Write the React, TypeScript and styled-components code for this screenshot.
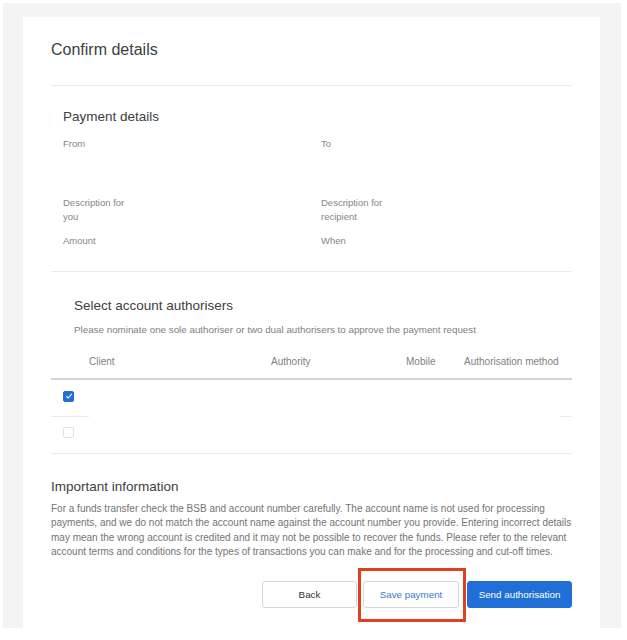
import React from "react";
import styled, { createGlobalStyle } from "styled-components";

const Global = createGlobalStyle`
  html, body { margin: 0; padding: 0; background: #ffffff; }
  body { font-family: "Liberation Sans", Arial, Helvetica, sans-serif; }
  * { box-sizing: border-box; }
`;

const Page = styled.div`
  width: 627px;
  height: 640px;
  padding: 3px 6px 0 3px;
  background: #ffffff;
`;

const Backdrop = styled.div`
  background: #f4f4f4;
  height: 625px;
  padding: 14px 21px 0 20px;
  display: flex;
  flex-direction: column;
`;

const Card = styled.div`
  background: #ffffff;
  flex: 1;
  padding: 0 28px;
  display: flex;
  flex-direction: column;
`;

const Title = styled.h1`
  margin: 23px 0 0;
  font-size: 16px;
  line-height: 20px;
  font-weight: 400;
  color: #404040;
`;

const Divider = styled.div<{ $top: number }>`
  margin-top: ${(p) => p.$top}px;
  height: 1px;
  background: #ebebeb;
`;

const Section = styled.section<{ $indent: number; $top: number }>`
  padding-left: ${(p) => p.$indent}px;
  margin-top: ${(p) => p.$top}px;
`;

const Heading = styled.h2`
  margin: 0;
  font-size: 13.5px;
  line-height: 18px;
  font-weight: 400;
  color: #404040;
`;

const FieldGrid = styled.div`
  margin-top: 11px;
  display: grid;
  grid-template-columns: 258px 1fr;
`;

const Field = styled.div<{ $gap: number }>`
  padding-bottom: ${(p) => p.$gap}px;
`;

const Label = styled.div`
  max-width: 70px;
  font-size: 9.5px;
  line-height: 14px;
  color: #858585;
`;

const Value = styled.div<{ $h: number }>`
  min-height: ${(p) => p.$h}px;
  font-size: 10px;
  color: #333;
`;

const Hint = styled.p`
  margin: 8px 0 0;
  font-size: 9.8px;
  line-height: 14px;
  color: #808080;
  white-space: nowrap;
`;

const Table = styled.div`
  margin-top: 18px;
  display: flex;
  flex-direction: column;
`;

const Grid = styled.div`
  display: grid;
  grid-template-columns: 38px 182px 135px 58px 1fr 12px;
`;

const HeadRow = styled(Grid)`
  padding-bottom: 9px;
  border-bottom: 2px solid #d4d4d4;
`;

const HeadCell = styled.div`
  font-size: 10px;
  line-height: 14px;
  color: #7f7f7f;
  white-space: nowrap;
`;

const BodyRow = styled(Grid)<{ $last?: boolean }>`
  height: 37px;
  border-bottom: ${(p) => (p.$last ? "1px solid #ebebeb" : "none")};
`;

const Cell = styled.div<{ $edge?: boolean }>`
  display: flex;
  align-items: center;
  border-bottom: ${(p) => (p.$edge ? "1px solid #ebebeb" : "1px solid transparent")};
`;

const CheckCell = styled(Cell)`
  padding-left: 12px;
  padding-bottom: 4px;
`;

const Box = styled.span<{ $on: boolean }>`
  width: 11px;
  height: 11px;
  border-radius: 2px;
  display: inline-flex;
  align-items: center;
  justify-content: center;
  background: ${(p) => (p.$on ? "#1f6fd6" : "#ffffff")};
  border: 1px solid ${(p) => (p.$on ? "#1f6fd6" : "#e2e2e2")};
`;

const Info = styled.section`
  margin-top: 24px;
`;

const Para = styled.p`
  margin: 6px 0 0;
  font-size: 10px;
  line-height: 14.3px;
  color: #747474;
  white-space: nowrap;
`;

const Actions = styled.div`
  margin-top: 22px;
  display: flex;
  justify-content: flex-end;
  align-items: center;
`;

const Button = styled.button<{ $variant: "plain" | "outline" | "primary"; $w: number; $ml: number }>`
  position: relative;
  width: ${(p) => p.$w}px;
  height: 27px;
  margin-left: ${(p) => p.$ml}px;
  border-radius: 3px;
  font-family: "Liberation Sans", Arial, sans-serif;
  font-size: 9.8px;
  cursor: pointer;
  border: 1px solid ${(p) => (p.$variant === "primary" ? "#1f6fd6" : "#d6d6d6")};
  background: ${(p) => (p.$variant === "primary" ? "#1f6fd6" : "#ffffff")};
  color: ${(p) =>
    p.$variant === "primary" ? "#ffffff" : p.$variant === "outline" ? "#3b79c9" : "#333333"};
`;

const Highlight = styled.span`
  position: absolute;
  top: -14px;
  bottom: -15px;
  left: -6px;
  right: -8px;
  border: 3px solid #e0401f;
  pointer-events: none;
`;

const Check = () => (
  <svg width="8" height="8" viewBox="0 0 8 8">
    <path d="M1.2 4.2 L3.2 6 L6.8 1.8" fill="none" stroke="#ffffff" strokeWidth="1.1" />
  </svg>
);

const rows = [true, false];

export default function App() {
  return (
    <>
      <Global />
      <Page>
        <Backdrop>
          <Card>
            <Title>Confirm details</Title>
            <Divider $top={25} />
            <Section $indent={12} $top={22}>
              <Heading>Payment details</Heading>
              <FieldGrid>
                <Field $gap={15}>
                  <Label>From</Label>
                  <Value $h={30} />
                </Field>
                <Field $gap={15}>
                  <Label>To</Label>
                  <Value $h={30} />
                </Field>
                <Field $gap={10}>
                  <Label>Description for you</Label>
                  <Value $h={0} />
                </Field>
                <Field $gap={10}>
                  <Label>Description for recipient</Label>
                  <Value $h={0} />
                </Field>
                <Field $gap={0}>
                  <Label>Amount</Label>
                  <Value $h={16} />
                </Field>
                <Field $gap={0}>
                  <Label>When</Label>
                  <Value $h={16} />
                </Field>
              </FieldGrid>
            </Section>
            <Divider $top={7} />
            <Section $indent={23} $top={25}>
              <Heading>Select account authorisers</Heading>
              <Hint>Please nominate one sole authoriser or two dual authorisers to approve the payment request</Hint>
            </Section>
            <Table>
              <HeadRow>
                <HeadCell />
                <HeadCell>Client</HeadCell>
                <HeadCell>Authority</HeadCell>
                <HeadCell>Mobile</HeadCell>
                <HeadCell>Authorisation method</HeadCell>
                <HeadCell />
              </HeadRow>
              {rows.map((on, i) => {
                const last = i === rows.length - 1;
                return (
                  <BodyRow key={i} $last={last}>
                    <CheckCell $edge={!last}>
                      <Box $on={on}>{on && <Check />}</Box>
                    </CheckCell>
                    <Cell />
                    <Cell />
                    <Cell />
                    <Cell />
                    <Cell $edge={!last} />
                  </BodyRow>
                );
              })}
            </Table>
            <Info>
              <Heading>Important information</Heading>
              <Para>
                For a funds transfer check the BSB and account number carefully. The account name is not used for processing
                <br />
                payments, and we do not match the account name against the account number you provide. Entering incorrect details
                <br />
                may mean the wrong account is credited and it may not be possible to recover the funds. Please refer to the relevant
                <br />
                account terms and conditions for the types of transactions you can make and for the processing and cut-off times.
              </Para>
            </Info>
            <Actions>
              <Button $variant="plain" $w={95} $ml={0}>Back</Button>
              <Button $variant="outline" $w={96} $ml={6}>
                Save payment
                <Highlight />
              </Button>
              <Button $variant="primary" $w={105} $ml={8}>Send authorisation</Button>
            </Actions>
          </Card>
        </Backdrop>
      </Page>
    </>
  );
}
